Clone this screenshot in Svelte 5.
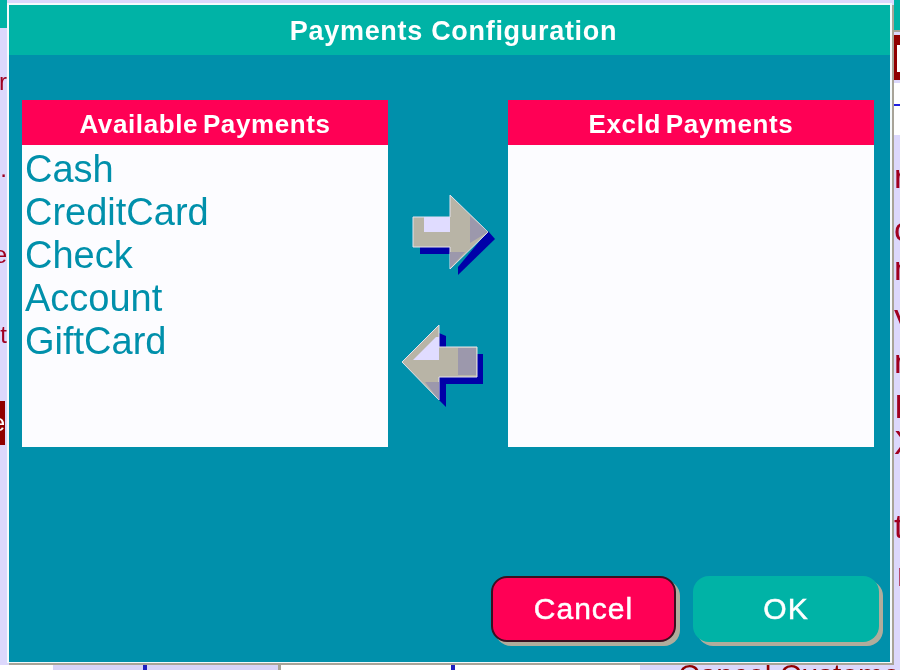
<script lang="ts">
  const available = ['Cash', 'CreditCard', 'Check', 'Account', 'GiftCard'];
  const excluded: string[] = [];
</script>

<div class="app">
  <div class="backdrop">
    <div class="rail left">
      <div class="strip"></div>
      <span class="frag f1">r</span>
      <span class="frag f2">.</span>
      <span class="frag f3">e</span>
      <span class="frag f4">t</span>
      <div class="darkbox"><span>e</span></div>
    </div>
    <div class="rail right">
      <div class="strip short"></div>
      <div class="redbox"><div class="redinner"></div></div>
      <div class="whitebox"><div class="blueline"></div></div>
      <span class="frag r1">r</span>
      <span class="frag r2">o</span>
      <span class="frag r3">n</span>
      <span class="frag r4">V</span>
      <span class="frag r5">n</span>
      <span class="frag r6">I</span>
      <span class="frag r7">X</span>
      <span class="frag r8">t</span>
      <span class="frag r9">n</span>
    </div>
  </div>
  <div class="bottom">
    <div class="cell white"></div>
    <div class="cell lav"><i class="tick"></i></div>
    <div class="cell paper"><i class="tick"></i></div>
    <div class="cell rest"><span>Cancel Customer Order</span></div>
  </div>

  <div class="dialog">
    <div class="title">Payments Configuration</div>
    <div class="body">
      <div class="lists">
        <section class="list">
          <h2>Available Payments</h2>
          <ul>
            {#each available as item}
              <li>{item}</li>
            {/each}
          </ul>
        </section>

        <div class="arrows">
          <svg width="120" height="90" viewBox="388 190 120 90">
            <path fill="#0000a8" d="M420 240h30v14h-30z" />
            <path fill="#0000a8" d="M488 231l7 8-37 36v-8z" />
            <path fill="#b8b4a6" stroke="#e4e2ec" stroke-width="1" d="M413 217h37v-22l38 37-38 37v-22h-37z" />
            <path fill="#e0dcff" d="M424 217h26v15h-26z" />
            <path fill="#9c98ac" d="M470 216l18 16-18 11z" />
            <path fill="#9c98ac" d="M450 252h15l-15 16z" />
          </svg>
          <svg width="120" height="90" viewBox="388 320 120 90">
            <path fill="#0000a8" d="M439 333l7 3v12h-7z" />
            <path fill="#0000a8" d="M470 354h13v30h-37v23l-7-7v-30h31z" />
            <path fill="#b8b4a6" stroke="#e4e2ec" stroke-width="1" d="M477 347h-38v-22l-37 37 37 38v-23h38z" />
            <path fill="#e0dcff" d="M413 360l23-23h3v23z" />
            <path fill="#9c98ac" d="M458 348h18v27h-18z" />
            <path fill="#9c98ac" d="M425 382h14v18z" />
          </svg>
        </div>

        <section class="list">
          <h2>Excld Payments</h2>
          <ul>
            {#each excluded as item}
              <li>{item}</li>
            {/each}
          </ul>
        </section>
      </div>

      <div class="actions">
        <button type="button" class="btn cancel">Cancel</button>
        <button type="button" class="btn ok">OK</button>
      </div>
    </div>
  </div>
</div>

<style>
  :global(body) {
    margin: 0;
    font-family: "Liberation Sans", Arial, sans-serif;
  }
  .app {
    position: relative;
    width: 900px;
    height: 670px;
    overflow: hidden;
    display: flex;
    flex-direction: column;
    background: #dcd8fc;
    filter: blur(0.6px);
  }
  .backdrop {
    flex: 1;
    display: flex;
    justify-content: space-between;
    min-height: 0;
  }
  .rail {
    display: flex;
    flex-direction: column;
    overflow: hidden;
  }
  .rail.left {
    width: 7px;
  }
  .rail.right {
    width: 6px;
  }
  .strip {
    height: 28px;
    flex: none;
    background: #00b3a6;
  }
  .strip.short {
    height: 30px;
    border-bottom: 2px solid #a8a498;
  }
  .frag {
    display: block;
    flex: none;
    color: #a00020;
    white-space: nowrap;
  }
  .left .frag {
    height: 26px;
    line-height: 26px;
    font-size: 24px;
    direction: rtl;
  }
  .right .frag {
    height: 34px;
    line-height: 34px;
    font-size: 34px;
  }
  .f1 { margin-top: 41px; }
  .f2 { margin-top: 61px; }
  .f3 { margin-top: 60px; }
  .f4 { margin-top: 54px; }
  .darkbox {
    margin-top: 53px;
    height: 44px;
    width: 5px;
    flex: none;
    overflow: hidden;
    background: #900000;
    color: #fff;
    font-size: 24px;
    line-height: 44px;
    direction: rtl;
  }
  .redbox {
    margin-top: 3px;
    height: 45px;
    flex: none;
    padding: 10px 0 8px 3px;
    box-sizing: border-box;
    background: #900000;
  }
  .redinner {
    height: 100%;
    background: #fff;
  }
  .whitebox {
    margin-top: 3px;
    height: 52px;
    flex: none;
    box-sizing: border-box;
    padding-top: 21px;
    background: #fff;
  }
  .blueline {
    height: 2px;
    background: #2020e0;
  }
  .r1 { margin-top: 24px; }
  .r2 { margin-top: 19px; }
  .r3 { margin-top: 5px; }
  .r4 { margin-top: 19px; }
  .r5 { margin-top: 6px; }
  .r6 { margin-top: 11px; }
  .r7 { margin-top: 2px; }
  .r8 { margin-top: 50px; }
  .right .r9 { margin-top: 14px; padding-left: 3px; }
  .bottom {
    height: 5px;
    flex: none;
    display: flex;
  }
  .cell {
    overflow: hidden;
  }
  .tick {
    display: block;
    width: 4px;
    height: 100%;
    background: #2020c0;
  }
  .cell.white {
    width: 53px;
    background: #fff;
  }
  .cell.lav {
    width: 225px;
    box-sizing: border-box;
    padding-left: 90px;
    background: #d8d4f8;
  }
  .cell.paper {
    width: 362px;
    box-sizing: border-box;
    padding-left: 170px;
    background: #fff;
    border-left: 3px solid #a8a498;
  }
  .cell.rest {
    flex: 1;
    padding-left: 38px;
  }
  .cell.rest span {
    display: block;
    margin-top: -7px;
    font-size: 30px;
    line-height: 34px;
    color: #900000;
    white-space: nowrap;
  }
  .dialog {
    position: absolute;
    left: 7px;
    top: 3px;
    width: 881px;
    height: 657px;
    border: solid #f4fafc;
    border-width: 2px 2px 1px;
    box-shadow: 2px 2px 0 #a8a498;
    display: flex;
    flex-direction: column;
    background: #0090ab;
  }
  .title {
    height: 50px;
    flex: none;
    box-sizing: border-box;
    padding: 2px 0 0 8px;
    display: flex;
    align-items: center;
    justify-content: center;
    background: #00b3a6;
    color: #fff;
    font-size: 27px;
    font-weight: 700;
    letter-spacing: 0.7px;
  }
  .body {
    flex: 1;
    min-height: 0;
    display: flex;
    flex-direction: column;
    justify-content: space-between;
    padding: 45px 11px 20px 13px;
  }
  .lists {
    display: grid;
    grid-template-columns: 366px 120px 366px;
  }
  .list {
    height: 347px;
    background: #fcfcff;
    color: #0090ab;
  }
  .list h2 {
    margin: 0;
    height: 45px;
    box-sizing: border-box;
    padding-top: 3px;
    display: flex;
    align-items: center;
    justify-content: center;
    background: #ff0055;
    color: #fff;
    font-size: 26px;
    font-weight: 700;
    letter-spacing: 0.6px;
    word-spacing: -3px;
  }
  .list ul {
    margin: 0;
    padding: 3px 0 0 3px;
    list-style: none;
  }
  .list li {
    height: 43px;
    line-height: 43px;
    font-size: 38px;
  }
  .arrows {
    display: flex;
    flex-direction: column;
    gap: 40px;
    padding-top: 90px;
  }
  .arrows svg {
    display: block;
  }
  .actions {
    display: flex;
    justify-content: flex-end;
    gap: 17px;
  }
  .btn {
    width: 186px;
    height: 66px;
    padding: 0;
    border-radius: 16px;
    font-family: inherit;
    font-size: 30px;
    letter-spacing: 1px;
    -webkit-text-stroke: 0.5px #fff;
    color: #fff;
    box-shadow: 4px 4px 0 #b0ac9c;
    cursor: pointer;
  }
  .cancel {
    width: 185px;
    background: #ff0055;
    border: 2px solid #3a1020;
  }
  .ok {
    background: #00b3a6;
    border: none;
  }
</style>
